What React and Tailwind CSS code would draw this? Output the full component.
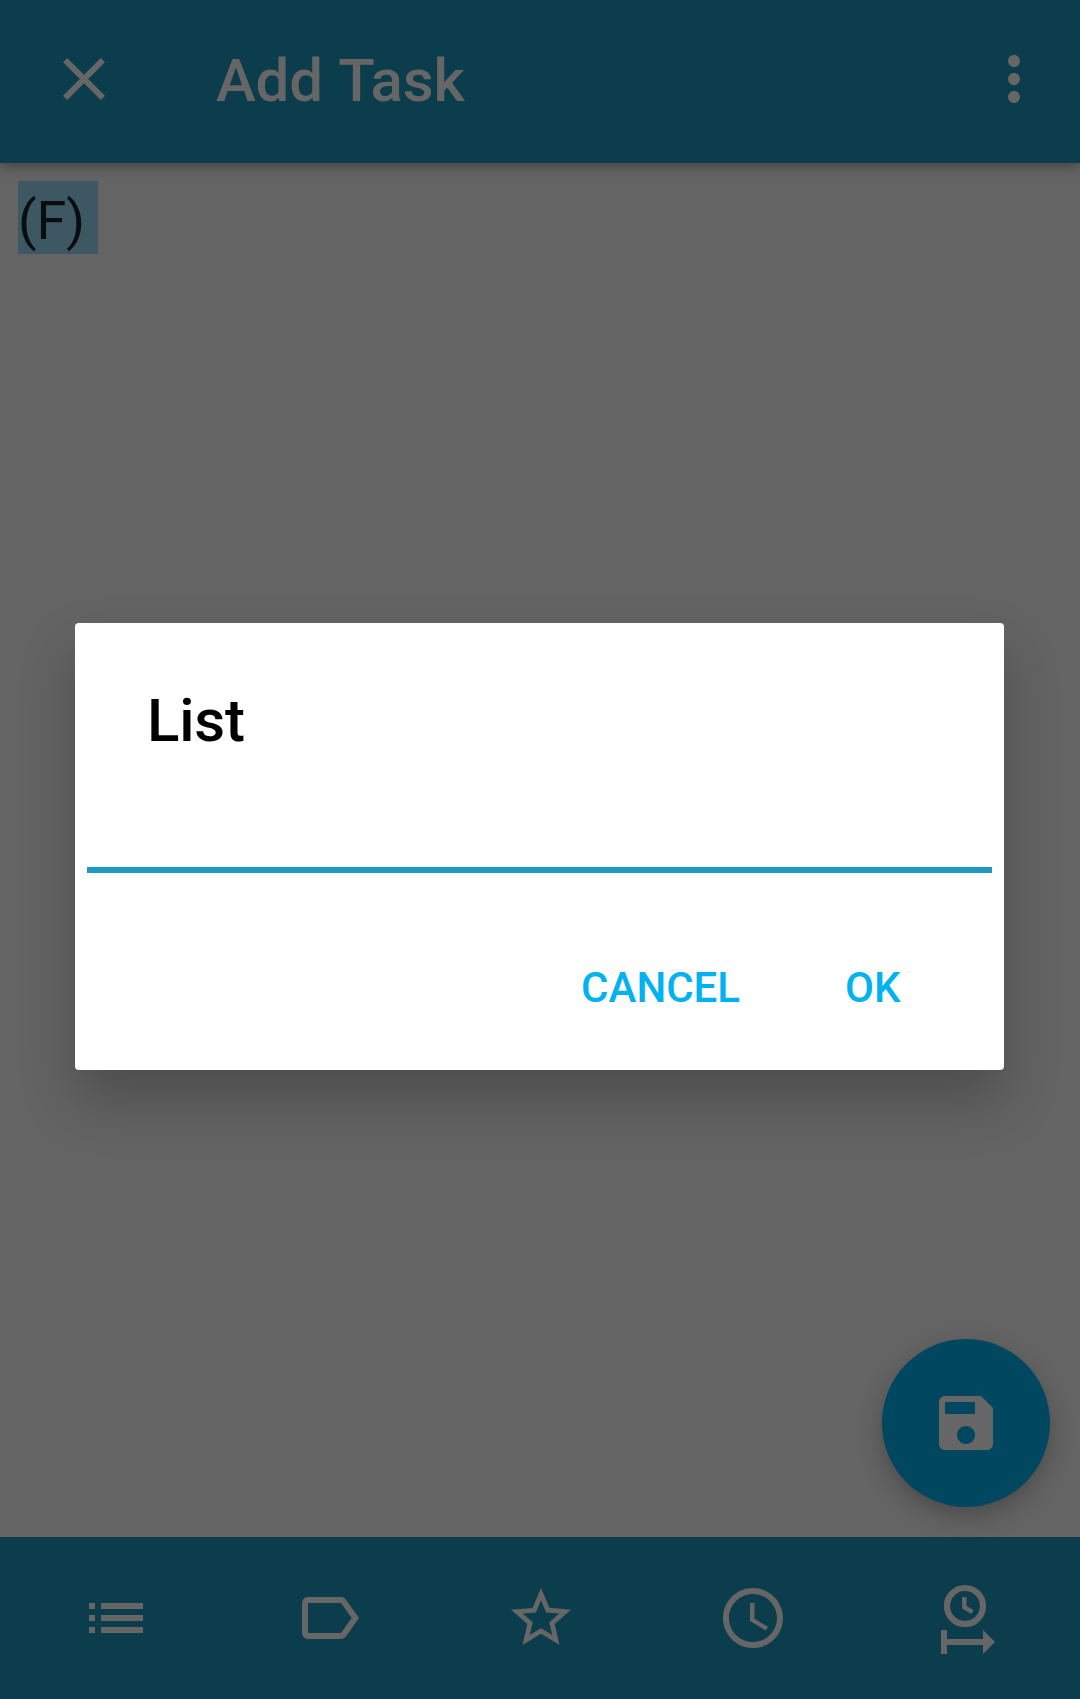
const ICONS = {
  close: "M19 6.41L17.59 5 12 10.59 6.41 5 5 6.41 10.59 12 5 17.59 6.41 19 12 13.41 17.59 19 19 17.59 13.41 12z",
  more: "M12 8c1.1 0 2-.9 2-2s-.9-2-2-2-2 .9-2 2 .9 2 2 2zm0 2c-1.1 0-2 .9-2 2s.9 2 2 2 2-.9 2-2-.9-2-2-2zm0 6c-1.1 0-2 .9-2 2s.9 2 2 2 2-.9 2-2-.9-2-2-2z",
  save: "M17 3H5c-1.11 0-2 .9-2 2v14c0 1.1.89 2 2 2h14c1.1 0 2-.9 2-2V7l-4-4zm-5 16c-1.66 0-3-1.34-3-3s1.34-3 3-3 3 1.34 3 3-1.34 3-3 3zm3-10H5V5h10v4z",
  list: "M3 13h2v-2H3v2zm0 4h2v-2H3v2zm0-8h2V7H3v2zm4 4h14v-2H7v2zm0 4h14v-2H7v2zM7 7v2h14V7H7z",
  label: "M17.63 5.84C17.27 5.33 16.67 5 16 5L5 5.01C3.9 5.01 3 5.9 3 7v10c0 1.1.9 1.99 2 1.99L16 19c.67 0 1.27-.33 1.63-.84L22 12l-4.37-6.16zM16 17H5V7h11l3.55 5L16 17z",
  star: "M22 9.24l-7.19-.62L12 2 9.19 8.63 2 9.24l5.46 4.73L5.82 21 12 17.27 18.18 21l-1.63-7.03L22 9.24zM12 15.4l-3.76 2.27 1-4.28-3.32-2.88 4.38-.38L12 6.1l1.71 4.04 4.38.38-3.32 2.88 1 4.28L12 15.4z",
  clock: "M11.99 2C6.47 2 2 6.48 2 12s4.47 10 9.99 10C17.52 22 22 17.52 22 12S17.52 2 11.99 2zM12 20c-4.42 0-8-3.58-8-8s3.58-8 8-8 8 3.58 8 8-3.58 8-8 8zM12.5 7H11v6l5.25 3.15.75-1.23-4.5-2.67z",
};

function Icon({ name, className = "" }) {
  return (
    <svg viewBox="0 0 24 24" className={`size-[72px] shrink-0 fill-current ${className}`}>
      <path d={ICONS[name]} />
    </svg>
  );
}

function ThresholdIcon() {
  return (
    <svg viewBox="0 0 72 72" className="size-[72px] shrink-0" fill="none" stroke="currentColor">
      <circle cx="36" cy="24" r="18" strokeWidth="6.2" />
      <path d="M35.3 15v10.2l8.2 5" strokeWidth="4.4" />
      <path d="M15 48v24M15 60h40" strokeWidth="6" />
      <path d="M54 48l12 12-12 12z" fill="currentColor" stroke="none" />
    </svg>
  );
}

export default function App() {
  return (
    <div className="relative flex h-[1699px] w-[1080px] flex-col overflow-hidden bg-[#646464] font-['Roboto',sans-serif] text-[#666666]">
      <header className="relative flex h-[163px] shrink-0 items-center bg-[#0c3d4c] pb-[5px] pl-12 pr-[30px] shadow-[0_4px_12px_rgba(0,0,0,0.3)]">
        <Icon name="close" />
        <h1 className="ml-24 mt-1 flex-1 text-[60px] font-medium leading-[70px] tracking-[-0.2px] [word-spacing:2px]">Add Task</h1>
        <Icon name="more" />
      </header>

      <main className="relative flex-1 pl-[18px] pt-[18px]">
        <span className="inline-block h-[73px] w-20 whitespace-pre bg-[#3d5863] pt-2 text-[54px] leading-[63px] text-[#0a0d0e]">
          (F){" "}
        </span>
        <button className="absolute bottom-[30px] right-[30px] flex size-[168px] items-center justify-center rounded-full bg-[#00475f] shadow-[0_9px_24px_rgba(0,0,0,0.26)]">
          <Icon name="save" />
        </button>
      </main>

      <footer className="flex h-[162px] shrink-0 items-center gap-[140px] bg-[#0c3d4c] pl-20">
        <Icon name="list" />
        <Icon name="label" className="ml-px" />
        <Icon name="star" />
        <Icon name="clock" />
        <ThresholdIcon />
      </footer>

      <section
        role="dialog"
        className="absolute left-[75px] top-[623px] flex h-[447px] w-[929px] flex-col rounded-[4px] bg-white px-3 shadow-[0_30px_56px_rgba(0,0,0,0.235)]"
      >
        <h2 className="mt-[63px] pl-[60px] text-[60px] font-medium leading-[70px] tracking-[-0.2px] text-black">List</h2>
        <input className="mt-[45px] h-[72px] shrink-0 border-b-[6px] border-[#1c98c3] outline-none" />
        <div className="mt-[90px] flex justify-end pr-[91.5px] text-[42px] font-medium leading-[50px] text-[#00b2f0]">
          <button>CANCEL</button>
          <button className="ml-[105px]">OK</button>
        </div>
      </section>
    </div>
  );
}
